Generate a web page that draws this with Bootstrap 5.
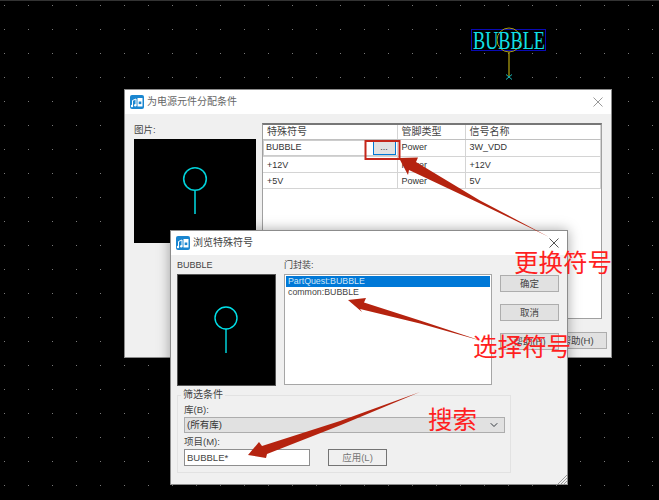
<!DOCTYPE html>
<html lang="zh">
<head>
    <meta charset="UTF-8">
    <meta name="viewport" content="width=device-width, initial-scale=1.0">
    <title>为电源元件分配条件</title>
    <link href="https://cdn.jsdelivr.net/npm/bootstrap@5.3.0/dist/css/bootstrap.min.css" rel="stylesheet">
    <script src="https://cdn.jsdelivr.net/npm/bootstrap@5.3.0/dist/js/bootstrap.bundle.min.js"></script>
    <style>
        html, body { margin: 0; background: #000; }
        body { font-family: "Liberation Sans", "Noto Sans CJK SC", sans-serif; font-size: 9px; color: #333; line-height: 1.2; }
        .cad-canvas {
            position: relative; width: 659px; height: 500px; overflow: hidden; background-color: #000;
            border-top: 1px solid #333;
            background-image: radial-gradient(circle at 0.5px 0.5px, #7a7a7a 0.7px, transparent 0.9px);
            background-size: 24px 24px; background-position: 4px 4px;
        }
        .symbol-top { position: absolute; left: 465px; top: 22px; }
        .win { position: absolute; background: #f0f0f0; border: 1px solid #8c8c8c; display: flex; flex-direction: column; }
        .win-back { left: 124px; top: 88px; width: 488px; height: 269px; }
        .win-front { left: 170px; top: 229px; width: 398px; height: 255px; box-shadow: 0 0 12px rgba(0,0,0,.35); }
        .win-title { height: 24px; flex: none; background: #fff; padding: 0 8px 0 5px; font-size: 10px; color: #666; }
        .win-front .win-title { color: #444; }
        .title-gap { gap: 3px; }
        .pic-label { height: 16px; font-size: 9.5px; padding-top: 1px; color: #444; }
        .pic-box { background: #000; }
        .back-body { flex: 1; padding: 9px 4px 0 9px; }
        .back-pic { width: 122px; }
        .back-pic .pic-box { width: 122px; height: 104px; }
        .grid-frame { width: 340px; height: 196px; background: #fff; border: 1px solid #a0a0a0; border-top: 2px solid #777; margin-left: 6px; }
        .pin-table { width: 338px; margin: 0; table-layout: fixed; font-size: 9px; --bs-table-bg: transparent; --bs-table-color: #333; }
        .pin-table th, .pin-table td { padding: 2px 0 0 4px; height: 16px; font-weight: 400; border-bottom: 1px solid #d4d4d4; border-right: 1px solid #d4d4d4; vertical-align: middle; box-shadow: none; }
        .pin-table th { padding-top: 0; height: 14px; font-size: 10px; color: #444; border-bottom-color: #c0c0c0; }
        .pin-table .row-first td { height: 17px; padding-top: 0; }
        .cell-edit { display: flex; align-items: center; justify-content: space-between; height: 16px; margin-left: -4px; padding-left: 2px; background: #fff; border: 1px solid #ccc; border-right: 0; }
        .dots-btn { width: 23px; height: 15px; padding: 0; margin-right: 1px; font-size: 9px; line-height: 9px; background: #e1e1e1; border: 1px solid #0078d7; border-radius: 0; color: #333; }
        .win-btn { width: 59px; height: 17px; padding: 0; font-size: 9.5px; line-height: 15px; background: #e1e1e1; border: 1px solid #adadad; border-radius: 0; color: #444; }
        .back-actions { margin-top: 13px; }
        .front-body { flex: 1; padding: 5px 0 0 6px; }
        .front-pic { width: 99px; }
        .front-pic .pic-box { width: 99px; height: 112px; border: 1px solid #555; }
        .pic-label-tight { height: 14px; padding-top: 0; font-size: 9px; }
        .pack-col { width: 208px; margin-left: 8px; }
        .pack-list { height: 111px; background: #fff; border: 1px solid #a6a6a6; border-radius: 0; padding: 1px; }
        .pack-list .list-group-item { padding: 0 2px; height: 11px; line-height: 10px; font-size: 8.8px; border: 0; border-radius: 0; background: transparent; color: #444; }
        .pack-list .list-group-item.active { background: #0078d7; color: #cfe6f8; }
        .btn-col { margin-left: 8px; padding-top: 15px; gap: 12px; }
        .filter-box { width: 334px; margin: 2px 0 0 0; padding: 0 6px; height: 85px; border: 1px solid #e2e2e2; }
        .filter-box legend { float: none; width: auto; margin: 0 0 0 -3px; padding: 0 2px; font-size: 10px; line-height: 14px; color: #444; }
        .field-label { height: 14px; line-height: 14px; font-size: 9.5px; color: #444; }
        .field-first { margin-top: 1px; }
        .field-next { margin-top: 2px; }
        .lib-select { height: 16px; min-height: 0; width: 321px; padding: 0 20px 0 2px; font-size: 9.5px; line-height: 14px; background-color: #e1e1e1; background-position: right 5px center; background-size: 10px 8px; border: 1px solid #adadad; border-radius: 0; color: #333; }
        .item-input { width: 126px; height: 17px; min-height: 0; padding: 0 2px; font-size: 9.5px; border: 1px solid #8e8e8e; border-radius: 0; color: #444; }
        .apply-btn { margin-left: 18px; background: #ccc; border-color: #bfbfbf; color: #8a8a8a; opacity: 1; }
        .grip { margin: auto 0 0 auto; }
        .markup { position: absolute; left: 0; top: -1px; }
        .callout { position: absolute; font-family: "Noto Sans CJK SC", sans-serif; font-weight: 400; font-size: 24.5px; line-height: 28px; color: #ff1f1f; white-space: nowrap; }
        .callout-a { left: 514px; top: 247px; }
        .callout-b { left: 473px; top: 331px; }
        .callout-c { left: 428px; top: 404px; }
    </style>
</head>
<body>
<div class="cad-canvas">
    <svg class="symbol-top" width="120" height="62" viewBox="465 23 120 62">
        <rect x="471.5" y="29.5" width="74" height="21" fill="none" stroke="#0a0ab4"/>
        <circle cx="509" cy="40" r="12" fill="none" stroke="#a89a10"/>
        <line x1="509" y1="52" x2="509" y2="76" stroke="#a89a10" stroke-width="1.3"/>
        <path d="M506 74.5l6 5M512 74.5l-6 5" stroke="#19b5b5" fill="none"/>
        <text x="473" y="49" font-family="Liberation Serif" font-size="26" fill="#10e0e8" textLength="72" lengthAdjust="spacingAndGlyphs">BUBBLE</text>
    </svg>

    <div class="win win-back">
        <div class="win-title d-flex align-items-center title-gap">
            <svg width="14" height="14" viewBox="0 0 14 14"><rect width="14" height="14" rx="2" fill="#1a86d0"/><path d="M2.5 11V5.5L6 4v6" stroke="#fff" fill="none"/><circle cx="2" cy="11" r="1.2" fill="#fff"/><circle cx="5.3" cy="10.2" r="1.2" fill="#fff"/><rect x="7.5" y="3" width="5" height="8.5" fill="#fff"/><rect x="8.7" y="6.5" width="2.6" height="2.6" fill="#1a86d0"/></svg>
            <span>为电源元件分配条件</span>
            <svg class="ms-auto" width="10" height="10" viewBox="0 0 10 10"><path d="M.5.5l9 9M9.5.5l-9 9" stroke="#999" fill="none"/></svg>
        </div>
        <div class="back-body d-flex flex-column">
            <div class="d-flex">
                <div class="back-pic">
                    <div class="pic-label">图片:</div>
                    <div class="pic-box">
                        <svg width="122" height="104" viewBox="0 0 122 104"><circle cx="61" cy="40" r="11.3" fill="none" stroke="#00d0d8" stroke-width="1.6"/><line x1="61" y1="51" x2="61" y2="75" stroke="#00d0d8" stroke-width="1.6"/></svg>
                    </div>
                </div>
                <div class="grid-frame">
                    <table class="table pin-table">
                        <colgroup><col style="width:134px"><col style="width:68px"><col></colgroup>
                        <thead><tr><th>特殊符号</th><th>管脚类型</th><th>信号名称</th></tr></thead>
                        <tbody>
                            <tr class="row-first"><td><div class="cell-edit"><span>BUBBLE</span><button type="button" class="btn dots-btn">...</button></div></td><td>Power</td><td>3W_VDD</td></tr>
                            <tr><td>+12V</td><td>Power</td><td>+12V</td></tr>
                            <tr><td>+5V</td><td>Power</td><td>5V</td></tr>
                        </tbody>
                    </table>
                </div>
            </div>
            <div class="back-actions d-flex justify-content-end">
                <button type="button" class="btn win-btn">帮助(H)</button>
            </div>
        </div>
    </div>

    <div class="win win-front">
        <div class="win-title d-flex align-items-center title-gap">
            <svg width="14" height="14" viewBox="0 0 14 14"><rect width="14" height="14" rx="2" fill="#1a86d0"/><path d="M2.5 11V5.5L6 4v6" stroke="#fff" fill="none"/><circle cx="2" cy="11" r="1.2" fill="#fff"/><circle cx="5.3" cy="10.2" r="1.2" fill="#fff"/><rect x="7.5" y="3" width="5" height="8.5" fill="#fff"/><rect x="8.7" y="6.5" width="2.6" height="2.6" fill="#1a86d0"/></svg>
            <span>浏览特殊符号</span>
            <svg class="ms-auto" width="10" height="10" viewBox="0 0 10 10"><path d="M.5.5l9 9M9.5.5l-9 9" stroke="#555" fill="none"/></svg>
        </div>
        <div class="front-body d-flex flex-column">
            <div class="d-flex">
                <div class="front-pic">
                    <div class="pic-label pic-label-tight">BUBBLE</div>
                    <div class="pic-box">
                        <svg width="97" height="110" viewBox="0 0 97 110"><circle cx="48" cy="43" r="11" fill="none" stroke="#00e0e8" stroke-width="1.4"/><line x1="48" y1="54" x2="48" y2="78" stroke="#00e0e8" stroke-width="1.4"/></svg>
                    </div>
                </div>
                <div class="pack-col">
                    <div class="pic-label pic-label-tight">门封装:</div>
                    <div class="list-group pack-list">
                        <div class="list-group-item active">PartQuest:BUBBLE</div>
                        <div class="list-group-item">common:BUBBLE</div>
                    </div>
                </div>
                <div class="btn-col d-flex flex-column">
                    <button type="button" class="btn win-btn">确定</button>
                    <button type="button" class="btn win-btn">取消</button>
                    <button type="button" class="btn win-btn">帮助(H)</button>
                </div>
            </div>
            <fieldset class="filter-box">
                <legend>筛选条件</legend>
                <div class="field-label field-first">库(B):</div>
                <select class="form-select lib-select"><option>(所有库)</option></select>
                <div class="field-label field-next">项目(M):</div>
                <div class="d-flex">
                    <input type="text" class="form-control item-input" value="BUBBLE*">
                    <button type="button" class="btn win-btn apply-btn" disabled>应用(L)</button>
                </div>
            </fieldset>
            <svg class="grip" width="9" height="9" viewBox="0 0 9 9"><path d="M9 0L0 9M9 3L3 9M9 6L6 9" stroke="#999" fill="none"/></svg>
        </div>
    </div>

    <svg class="markup" width="659" height="500" viewBox="0 0 659 500">
        <rect x="365.5" y="141" width="34" height="18" fill="none" stroke="#c4261a" stroke-width="2"/>
        <path d="M399 158L418 157.5L416 162L480 200.5L549 237L479 203L409 170L408 175Z" fill="#b5230f"/>
        <path d="M348 300L366 298L364 302.5L420 320.5L482 341L420 323.5L360 309L362 312Z" fill="#b5230f"/>
        <path d="M248 455L259 442L262 446L340 421L420 392L341 425L267 454L266 458Z" fill="#b5230f"/>
    </svg>
    <div class="callout callout-a">更换符号</div>
    <div class="callout callout-b">选择符号</div>
    <div class="callout callout-c">搜索</div>
</div>
</body>
</html>
